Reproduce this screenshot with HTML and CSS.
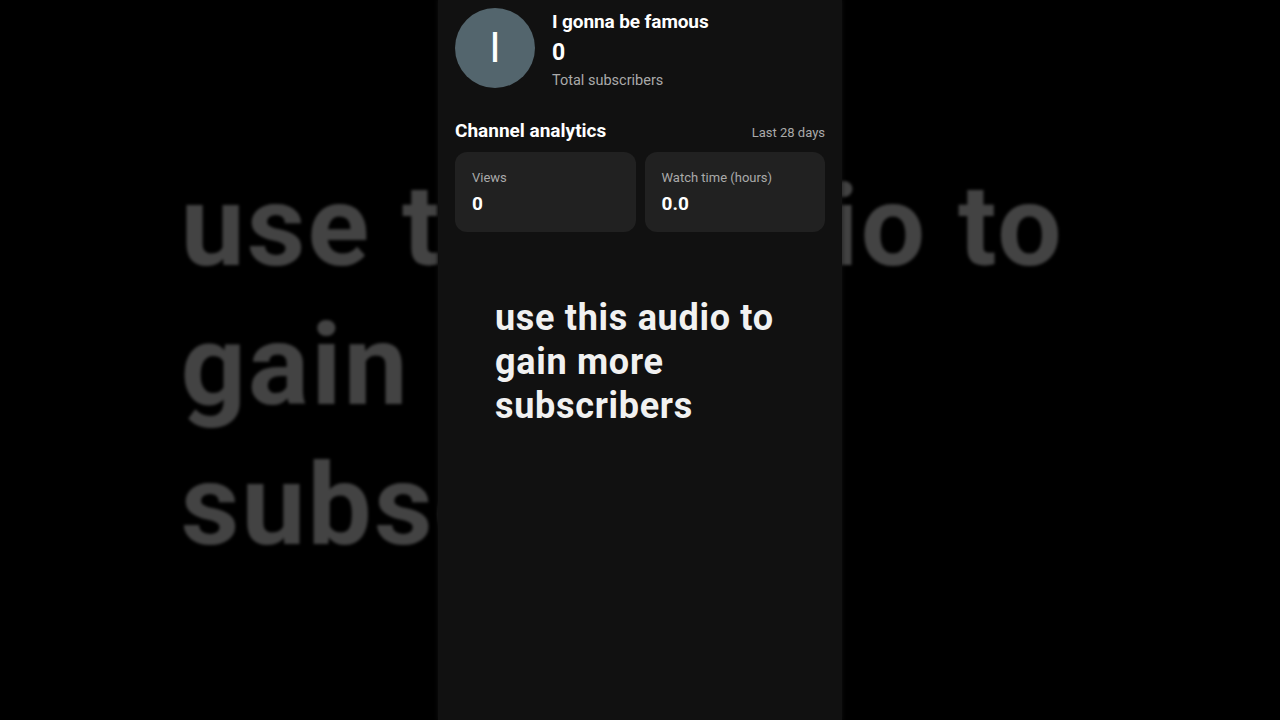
FILE: index.html
```html
<!DOCTYPE html>
<html lang="en">
<head>
<meta charset="utf-8">
<title>Channel analytics</title>
<link rel="stylesheet" href="styles.css">
</head>
<body>
<div class="stage">
  <div class="backdrop" aria-hidden="true">
    <div class="panel panel--ghost">
      <div class="channel">
        <div class="avatar">I</div>
        <div class="channel-info">
          <div class="channel-name">I gonna be famous</div>
          <div class="sub-count">0</div>
          <div class="sub-label">Total subscribers</div>
        </div>
      </div>
      <div class="section-head">
        <div class="section-title">Channel analytics</div>
        <div class="section-range">Last 28 days</div>
      </div>
      <div class="cards">
        <div class="card"><div class="card-label">Views</div><div class="card-value">0</div></div>
        <div class="card"><div class="card-label">Watch time (hours)</div><div class="card-value">0.0</div></div>
      </div>
      <div class="caption">use this audio to gain more subscribers</div>
    </div>
  </div>

  <div class="panel">
    <div class="channel">
      <div class="avatar">I</div>
      <div class="channel-info">
        <div class="channel-name">I gonna be famous</div>
        <div class="sub-count">0</div>
        <div class="sub-label">Total subscribers</div>
      </div>
    </div>
    <div class="section-head">
      <div class="section-title">Channel analytics</div>
      <div class="section-range">Last 28 days</div>
    </div>
    <div class="cards">
      <div class="card"><div class="card-label">Views</div><div class="card-value">0</div></div>
      <div class="card"><div class="card-label">Watch time (hours)</div><div class="card-value">0.0</div></div>
    </div>
    <div class="caption">use this audio to gain more subscribers</div>
  </div>
</div>
</body>
</html>
```
FILE: styles.css
```css
html, body {
  margin: 0;
  padding: 0;
  background: #000;
}
body {
  width: 1280px;
  height: 720px;
  overflow: hidden;
  font-family: Roboto, "Noto Sans", "Liberation Sans", sans-serif;
}
.stage {
  position: relative;
  width: 1280px;
  height: 720px;
  display: flex;
  justify-content: center;
  overflow: hidden;
  background: #000;
}
.backdrop {
  position: absolute;
  top: 0;
  left: 438px;
  width: 404px;
  height: 720px;
  transform: scale(3.168);
  transform-origin: 202px 360px;
  filter: brightness(0.28) blur(0.5px);
}
.panel {
  position: relative;
  width: 404px;
  height: 720px;
  box-sizing: border-box;
  padding: 8px 17px 0;
  background: #111;
  box-shadow: 0 0 4px 1px rgba(20, 20, 20, 0.6);
}
.panel--ghost {
  background: transparent;
  box-shadow: none;
}
.channel {
  display: flex;
  gap: 17px;
}
.avatar {
  width: 80px;
  height: 80px;
  border-radius: 50%;
  background: #53656d;
  color: #fff;
  font-size: 42px;
  line-height: 80px;
  text-align: center;
  font-weight: 400;
  flex: none;
}
.channel-info {
  padding-top: 3px;
}
.channel-name {
  font-size: 19px;
  line-height: 22px;
  font-weight: 700;
  color: #fff;
  letter-spacing: -0.1px;
}
.sub-count {
  margin-top: 7px;
  font-size: 23px;
  line-height: 26px;
  font-weight: 700;
  color: #fff;
}
.sub-label {
  margin-top: 6px;
  font-size: 14.5px;
  line-height: 18px;
  color: #aaa;
}
.section-head {
  margin-top: 30px;
  display: flex;
  justify-content: space-between;
  align-items: baseline;
}
.section-title {
  font-size: 19px;
  line-height: 22px;
  font-weight: 700;
  color: #fff;
}
.section-range {
  font-size: 13px;
  line-height: 16px;
  color: #aaa;
}
.cards {
  margin-top: 10px;
  display: grid;
  grid-template-columns: 1fr 1fr;
  gap: 9px;
}
.card {
  height: 80px;
  box-sizing: border-box;
  padding: 18px 17px 0;
  background: #212121;
  border-radius: 12px;
}
.card-label {
  font-size: 13px;
  line-height: 16px;
  color: #aaa;
}
.card-value {
  margin-top: 7px;
  font-size: 19px;
  line-height: 22px;
  font-weight: 700;
  color: #fff;
}
.caption {
  margin-top: 64px;
  padding-left: 40px;
  width: 310px;
  font-size: 36px;
  line-height: 44px;
  letter-spacing: 0.7px;
  font-weight: 700;
  color: #f1f1f1;
}
```
